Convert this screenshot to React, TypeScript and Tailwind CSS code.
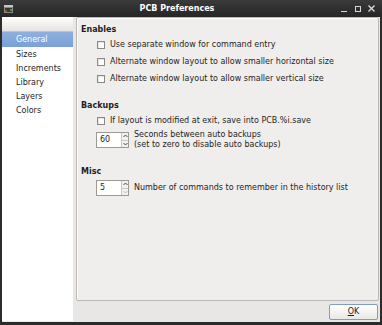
function Checkbox({ label }: { label: string }) {
  return (
    <div className="flex h-[17px] items-center pl-[16px]">
      <span className="h-[8px] w-[8px] border border-[#8c8a86] bg-white shadow-[inset_1px_1px_0_#e6e4e1]" />
      <span className="ml-[5px] leading-[10px]">{label}</span>
    </div>
  )
}

function Spin({ value, downDisabled }: { value: string; downDisabled?: boolean }) {
  return (
    <div className="flex h-[16px] w-[33px] shrink-0 border border-[#9d9a96] bg-white">
      <span className="flex-1 pl-[3px] leading-[14px]">{value}</span>
      <div className="flex w-[7px] flex-col border-l border-[#c9c6c2] bg-[#f3f2f0]">
        <div className="flex flex-1 items-center justify-center border-b border-[#c9c6c2]">
          <svg width="5" height="4" viewBox="0 0 5 4">
            <path d="M0.5 3 L2.5 1 L4.5 3" fill="none" stroke="#444" strokeWidth="1" />
          </svg>
        </div>
        <div className="flex flex-1 items-center justify-center">
          <svg width="5" height="4" viewBox="0 0 5 4">
            <path d="M0.5 1 L2.5 3 L4.5 1" fill="none" stroke={downDisabled ? '#bbb' : '#444'} strokeWidth="1" />
          </svg>
        </div>
      </div>
    </div>
  )
}

export default function App() {
  const pages = ['General', 'Sizes', 'Increments', 'Library', 'Layers', 'Colors']
  return (
    <div className="flex h-[325px] w-[382px] flex-col bg-[#2b2b2b] font-['DejaVu_Sans',sans-serif] text-[8px] text-[#1e1e1e]">
      {/* title bar */}
      <div className="flex h-[17px] items-center bg-gradient-to-b from-[#3a3a3a] to-[#262626]">
        <div className="flex w-[16px] justify-center">
          <svg width="9" height="8" viewBox="0 0 9 8">
            <rect x="0" y="0" width="9" height="8" fill="#8a8a8a" />
            <rect x="0" y="0" width="9" height="2" fill="#c8c8c8" />
            <rect x="1" y="3" width="7" height="4" fill="#2f3a30" />
            <rect x="1" y="5" width="2" height="2" fill="#c0392b" />
            <rect x="6" y="4" width="2" height="2" fill="#4a9a3a" />
          </svg>
        </div>
        <div className="flex-1 text-center font-bold leading-[10px] text-white">PCB Preferences</div>
        <div className="flex w-[44px] items-center justify-between pl-[3px] pr-[7px] text-[#d8d8d8]">
          <span className="mt-[5px] h-[1px] w-[6px] bg-[#d8d8d8]" />
          <span className="h-[6px] w-[6px] border border-[#d8d8d8]" />
          <svg width="7" height="7" viewBox="0 0 7 7">
            <path d="M0.5 0.5 L6.5 6.5 M6.5 0.5 L0.5 6.5" stroke="#d8d8d8" strokeWidth="1.4" />
          </svg>
        </div>
      </div>

      {/* body */}
      <div className="mx-[2px] mb-[3px] flex flex-1 bg-[#e8e7e5] pb-[1px]">
        <div className="flex w-[71px] flex-col bg-white">
          <div className="h-[15px] border-b border-[#c7c3be] bg-gradient-to-b from-white to-[#e6e4e1]" />
          {pages.map((p, i) => (
            <div
              key={p}
              className={
                i === 0
                  ? 'h-[15px] bg-gradient-to-b from-[#8fb0de] to-[#7aa0d6] pl-[14px] leading-[15px] text-white'
                  : 'h-[14px] pl-[14px] leading-[15px]'
              }
            >
              {p}
            </div>
          ))}
        </div>

        <div className="ml-[3px] mr-[1px] flex flex-1 flex-col">
          <div className="h-[284px] rounded-[2px] border border-[#bcb8b3] bg-[#efeeec] pl-[4px] pt-[7px] shadow-[inset_1px_1px_0_#ffffff]">
            <div className="h-[11px] font-bold leading-[10px]">Enables</div>
            <Checkbox label="Use separate window for command entry" />
            <Checkbox label="Alternate window layout to allow smaller horizontal size" />
            <Checkbox label="Alternate window layout to allow smaller vertical size" />

            <div className="mt-[14px] h-[10px] font-bold leading-[10px]">Backups</div>
            <div className="mt-[1px]">
              <Checkbox label="If layout is modified at exit, save into PCB.%i.save" />
            </div>
            <div className="mt-[1px] flex items-center pl-[15px]">
              <Spin value="60" />
              <div className="ml-[5px] leading-[10px]">
                <div>Seconds between auto backups</div>
                <div>(set to zero to disable auto backups)</div>
              </div>
            </div>

            <div className="mt-[17px] h-[10px] font-bold leading-[10px]">Misc</div>
            <div className="mt-[3px] flex items-center pl-[15px]">
              <Spin value="5" downDisabled />
              <span className="ml-[5px] leading-[10px]">Number of commands to remember in the history list</span>
            </div>
          </div>

          <div className="mt-[3px] flex justify-end pr-[1px]">
            <button className="h-[16px] w-[49px] rounded-[2px] border border-[#7f9cc4] bg-gradient-to-b from-white to-[#e9e8e6] leading-[14px] text-[#1e1e1e]">
              <span className="underline">O</span>K
            </button>
          </div>
        </div>
      </div>
    </div>
  )
}
